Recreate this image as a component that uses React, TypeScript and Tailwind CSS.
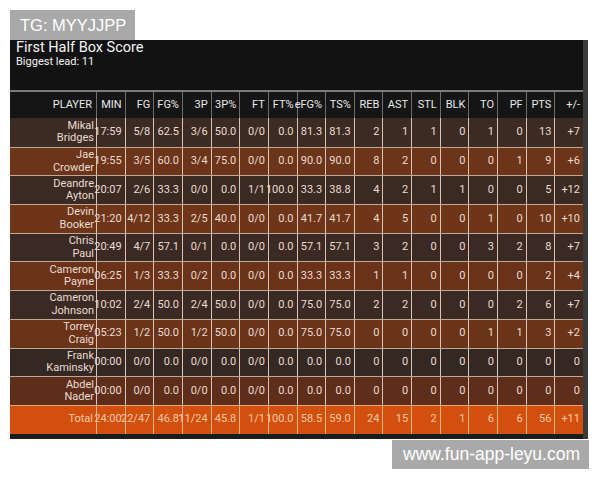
import React from "react";

type Row = { name: [string, string?]; v: string[] };

const headers = ["MIN", "FG", "FG%", "3P", "3P%", "FT", "FT%", "eFG%", "TS%", "REB", "AST", "STL", "BLK", "TO", "PF", "PTS", "+/-"];

const rows: Row[] = [
  { name: ["Mikal", "Bridges"], v: ["17:59", "5/8", "62.5", "3/6", "50.0", "0/0", "0.0", "81.3", "81.3", "2", "1", "1", "0", "1", "0", "13", "+7"] },
  { name: ["Jae", "Crowder"], v: ["19:55", "3/5", "60.0", "3/4", "75.0", "0/0", "0.0", "90.0", "90.0", "8", "2", "0", "0", "0", "1", "9", "+6"] },
  { name: ["Deandre", "Ayton"], v: ["20:07", "2/6", "33.3", "0/0", "0.0", "1/1", "100.0", "33.3", "38.8", "4", "2", "1", "1", "0", "0", "5", "+12"] },
  { name: ["Devin", "Booker"], v: ["21:20", "4/12", "33.3", "2/5", "40.0", "0/0", "0.0", "41.7", "41.7", "4", "5", "0", "0", "1", "0", "10", "+10"] },
  { name: ["Chris", "Paul"], v: ["20:49", "4/7", "57.1", "0/1", "0.0", "0/0", "0.0", "57.1", "57.1", "3", "2", "0", "0", "3", "2", "8", "+7"] },
  { name: ["Cameron", "Payne"], v: ["06:25", "1/3", "33.3", "0/2", "0.0", "0/0", "0.0", "33.3", "33.3", "1", "1", "0", "0", "0", "0", "2", "+4"] },
  { name: ["Cameron", "Johnson"], v: ["10:02", "2/4", "50.0", "2/4", "50.0", "0/0", "0.0", "75.0", "75.0", "2", "2", "0", "0", "0", "2", "6", "+7"] },
  { name: ["Torrey", "Craig"], v: ["05:23", "1/2", "50.0", "1/2", "50.0", "0/0", "0.0", "75.0", "75.0", "0", "0", "0", "0", "1", "1", "3", "+2"] },
  { name: ["Frank", "Kaminsky"], v: ["00:00", "0/0", "0.0", "0/0", "0.0", "0/0", "0.0", "0.0", "0.0", "0", "0", "0", "0", "0", "0", "0", "0"] },
  { name: ["Abdel", "Nader"], v: ["00:00", "0/0", "0.0", "0/0", "0.0", "0/0", "0.0", "0.0", "0.0", "0", "0", "0", "0", "0", "0", "0", "0"] },
];

const total: string[] = ["24:00", "22/47", "46.8", "11/24", "45.8", "1/1", "100.0", "58.5", "59.0", "24", "15", "2", "1", "6", "6", "56", "+11"];

const rowBg = ["bg-[#3c2b23]", "bg-[#6c3419]", "bg-[#3a2a22]", "bg-[#6e3519]", "bg-[#3b2a23]", "bg-[#6a3319]", "bg-[#3a2a23]", "bg-[#6b3419]", "bg-[#352722]", "bg-[#5e2e1a]"];

export default function App() {
  return (
    <div className="w-[600px] h-[480px] bg-white font-['Roboto',sans-serif] overflow-hidden">
      <div className="pt-[10px] pl-[10px]">
        <div className="w-[125px] h-[30px] bg-[#a9a9a9] text-white text-[16.5px] flex items-center pl-[10px] font-['Liberation_Sans',sans-serif]">
          TG: MYYJJPP
        </div>
        <div className="w-[578px] h-[399px] bg-[#121212] flex">
          <div className="w-[573px] flex flex-col">
            <div className="h-[50px] pl-[6px] text-[#f2f2f2]">
              <div className="text-[14.5px] leading-[16px]">First Half Box Score</div>
              <div className="text-[11px] leading-[12px]">Biggest lead: 11</div>
            </div>
            <div className="grid grid-cols-[86px_repeat(17,minmax(0,1fr))] h-[28px] bg-[#151515] border-t-2 border-[#7b7b7b] text-[11px] text-[#e8e8e8]">
              <div className="flex items-center justify-end pr-[4px] whitespace-nowrap">PLAYER</div>
              {headers.map((h) => (
                <div key={h} className="flex items-center justify-end pr-[3px] whitespace-nowrap border-l border-[#6e6e6e]">
                  {h}
                </div>
              ))}
            </div>
            {rows.map((r, i) => (
              <div
                key={i}
                className={`grid grid-cols-[86px_repeat(17,minmax(0,1fr))] h-[28.7px] ${rowBg[i]} text-[11px] text-[#eadcd2] ${i > 0 ? "border-t border-[#bfa898]" : ""}`}
              >
                <div className="flex flex-col items-end justify-center pr-[2px] leading-[12.5px] whitespace-nowrap">
                  <span>{r.name[0]}</span>
                  <span>{r.name[1]}</span>
                </div>
                {r.v.map((v, j) => (
                  <div key={j} className="flex items-center justify-end pr-[3px] whitespace-nowrap border-l border-[#d6c4b6]">
                    {v}
                  </div>
                ))}
              </div>
            ))}
            <div className="grid grid-cols-[86px_repeat(17,minmax(0,1fr))] h-[28.7px] bg-[#d24f0d] border-t border-[#e8a47c] text-[11px] text-[#f8cba8]">
              <div className="flex items-center justify-end pr-[3px] whitespace-nowrap">Total</div>
              {total.map((v, j) => (
                <div key={j} className="flex items-center justify-end pr-[3px] whitespace-nowrap border-l border-[#f0b48c]">
                  {v}
                </div>
              ))}
            </div>
            <div className="flex-1 bg-[#1c1c1c]" />
          </div>
          <div className="w-[5px] bg-[#3a3a3a]" />
        </div>
        <div className="flex justify-end pr-[11px] mt-[1px]">
          <div className="w-[197px] h-[29px] bg-[#a9a9a9] text-white text-[17.5px] flex items-center pl-[11px] font-['Liberation_Sans',sans-serif]">
            www.fun-app-leyu.com
          </div>
        </div>
      </div>
    </div>
  );
}
